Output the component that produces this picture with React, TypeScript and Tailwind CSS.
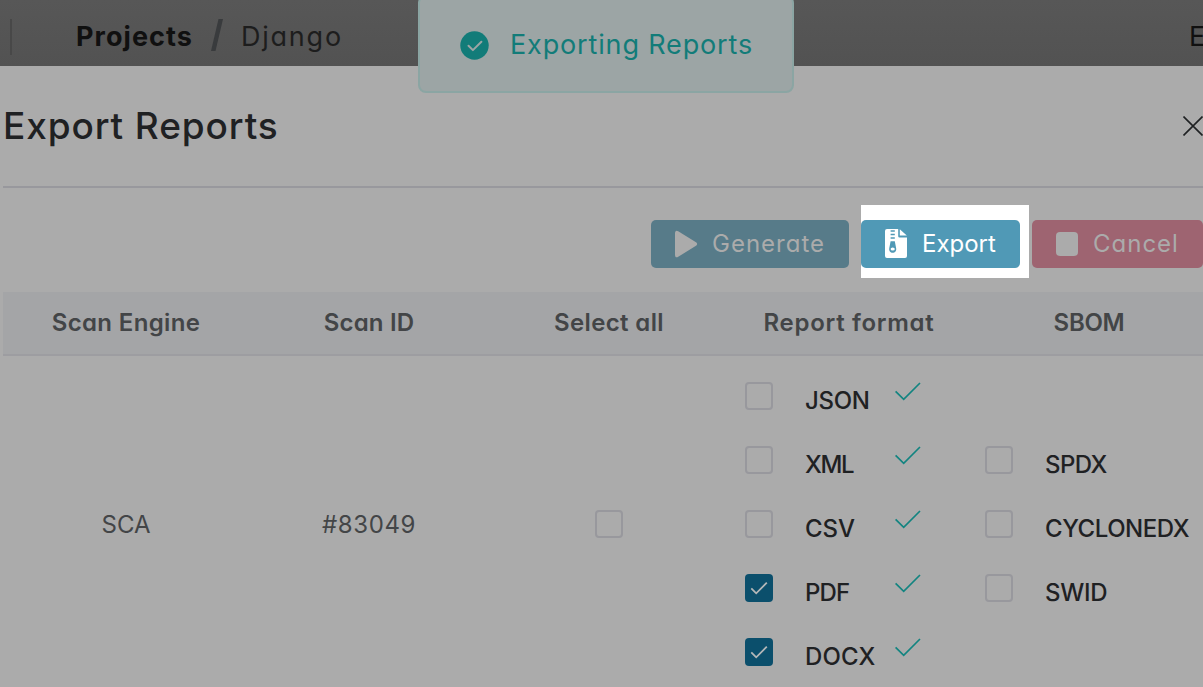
import React from "react";

function Box({ checked }: { checked?: boolean }) {
  return checked ? (
    <span className="flex h-7 w-7 shrink-0 items-center justify-center rounded-[4px] bg-[#0b4f6c]">
      <svg width="28" height="28" viewBox="0 0 28 28" fill="none" stroke="#b4b7b8" strokeWidth="1.8">
        <path d="M6.3 14.4 11.2 19.3 21.8 8.6" />
      </svg>
    </span>
  ) : (
    <span className="h-7 w-7 shrink-0 rounded-[4px] border-2 border-[#98989d]" />
  );
}

type OptionProps = { label: string; track: string; checked?: boolean; done?: boolean };

function Option({ label, track, checked, done }: OptionProps) {
  return (
    <div className="flex h-16 items-center pl-4">
      <Box checked={checked} />
      <span className={`w-[122px] shrink-0 pt-[9px] pl-8 text-[24px] leading-8 font-medium whitespace-nowrap text-[#1f2123] ${track}`}>
        {label}
      </span>
      {done && (
        <svg className="mb-[9px] shrink-0" width="26" height="20" viewBox="0 0 26 20" fill="none" stroke="#128480" strokeWidth="1.7">
          <path d="M.6 9.3 8.7 17.3 25 1" />
        </svg>
      )}
    </div>
  );
}

const columns = [
  { label: "Scan Engine", track: "tracking-[0.35px]" },
  { label: "Scan ID", track: "tracking-[0.2px]" },
  { label: "Select all", track: "tracking-[0.35px]" },
  { label: "Report format", track: "tracking-[0.7px]" },
  { label: "SBOM", track: "tracking-[-0.3px]" },
];

export default function App() {
  return (
    <div className="relative flex h-[687px] w-[1203px] flex-col overflow-hidden bg-[#ababab] font-['Inter',sans-serif] [font-feature-settings:'cv11']">
      <header className="flex h-[66px] shrink-0 items-center bg-linear-to-b from-[#575757] to-[#525252]">
        <span className="mt-[7px] ml-[10px] h-9 w-[2px] bg-[#484848]" />
        <span className="mt-2 ml-16 text-[27px] leading-8 font-bold tracking-[1.05px] text-[#101010]">Projects</span>
        <svg className="mt-1 ml-[18px]" width="12" height="32" viewBox="0 0 12 32">
          <path d="M7.5 0H12L4.5 32H0Z" fill="#393b3d" />
        </svg>
        <span className="mt-2 ml-[18px] text-[27px] leading-8 font-normal tracking-[1.8px] text-[#1d1d1d]">Django</span>
        <span className="mt-2 ml-auto w-[14px] shrink-0 text-[27px] leading-8 text-[#101010]">E</span>
      </header>

      <section className="ml-[3px] flex h-[122px] shrink-0 items-center justify-between border-b-2 border-[#98989d]">
        <h1 className="text-[37px] leading-[44px] font-medium tracking-[0.9px] text-[#1f2123]">Export Reports</h1>
        <svg className="shrink-0" width="20" height="20" viewBox="0 0 20 20" fill="none" stroke="#1f2123" strokeWidth="1.6">
          <path d="M.5.5 19.5 19.5M19.5.5.5 19.5" />
        </svg>
      </section>

      <div className="flex h-[104px] shrink-0 items-center gap-3 pt-2 pl-[651px]">
        <button className="flex h-12 w-[198px] shrink-0 items-center rounded-[5px] bg-[#577b89] pl-[23px] text-[24px] text-[#ababab]">
          <svg width="24" height="28" viewBox="0 0 24 28" fill="currentColor">
            <path d="M1 3.2C1 .8 2.4 0 4.2 1.2L22 12.2C23.5 13.2 23.5 14.8 22 15.8L4.2 26.8C2.4 28 1 27.2 1 24.8Z" />
          </svg>
          <span className="ml-[14px] font-normal tracking-[1px]">Generate</span>
        </button>
        <div className="relative h-12 w-[159px] shrink-0">
          <span className="absolute -top-[15px] left-0 h-[73px] w-[168px] bg-white" />
          <button className="relative flex h-12 w-full items-center rounded-[5px] bg-[#5099b6] pl-6 text-[24px] text-white">
            <svg className="-mt-px" width="22" height="29" viewBox="0 0 22 29">
              <path fill="currentColor" d="M2 0H13.2V7.2Q13.2 8.6 14.6 8.6H22V27Q22 29 20 29H2Q0 29 0 27V2Q0 0 2 0ZM14.8 .2 21.8 6.6H14.8Z" />
              <path fill="#5099b6" d="M5.6 1.3h4.2v1.5H5.6ZM5.6 4.8h4.2v1.5H5.6ZM5.6 8.2h4.2v1.5H5.6ZM5.6 12.2h4.2L11.1 19C11.7 22 10.1 23.8 7.7 23.8S3.7 22 4.3 19Z" />
              <ellipse cx="7.7" cy="20" rx="2.1" ry="1.6" fill="currentColor" />
            </svg>
            <span className="ml-[15px] font-normal">Export</span>
          </button>
        </div>
        <button className="flex h-12 w-[171px] shrink-0 items-center rounded-[5px] bg-[#9e6471] pl-6 text-[24px] text-[#ababab]">
          <span className="h-6 w-[22px] rounded-[4px] bg-[#ababab]" />
          <span className="ml-[15px] font-normal tracking-[1px]">Cancel</span>
        </button>
      </div>

      <div className="ml-[3px] grid h-16 shrink-0 grid-cols-[246px_240px_240px_240px_240px] items-center border-b-2 border-[#9d9da1] bg-[#a4a5a7] text-center text-[24px] font-semibold text-[#434547]">
        {columns.map((c) => (
          <span key={c.label} className={c.track}>{c.label}</span>
        ))}
      </div>
      <div className="ml-[3px] grid h-[336px] shrink-0 grid-cols-[246px_240px_240px_240px_240px] items-center text-[24px] text-[#434547]">
        <span className="pt-px text-center">SCA</span>
        <span className="pt-px text-center tracking-[0.6px]">#83049</span>
        <span className="flex justify-center"><Box /></span>
        <div>
          <Option label="JSON" track="tracking-[-0.3px]" done />
          <Option label="XML" track="tracking-[-1.4px]" done />
          <Option label="CSV" track="tracking-[0px]" done />
          <Option label="PDF" track="tracking-[-0.9px]" checked done />
          <Option label="DOCX" track="tracking-[0.1px]" checked done />
        </div>
        <div>
          <Option label="SPDX" track="tracking-[-0.6px]" />
          <Option label="CYCLONEDX" track="tracking-[-0.45px]" />
          <Option label="SWID" track="tracking-[-0.3px]" />
        </div>
      </div>

      <div className="absolute top-[-5px] left-[418px] flex h-[98px] w-[376px] items-center rounded-[8px] border-2 border-[#8ba5a3] bg-[#9ca5a5] pt-[2px] pl-[40px]">
        <svg width="29" height="29" viewBox="0 0 29 29" fill="none">
          <circle cx="14.5" cy="14.5" r="14.2" fill="#127c79" />
          <path d="m8.5 14.7 4.4 4.4 8.5-8.3" stroke="#9ca5a5" strokeWidth="2" strokeLinecap="round" strokeLinejoin="round" />
        </svg>
        <span className="ml-[21px] text-[27px] leading-8 font-normal tracking-[0.85px] whitespace-nowrap text-[#127c79]">Exporting Reports</span>
      </div>
    </div>
  );
}
